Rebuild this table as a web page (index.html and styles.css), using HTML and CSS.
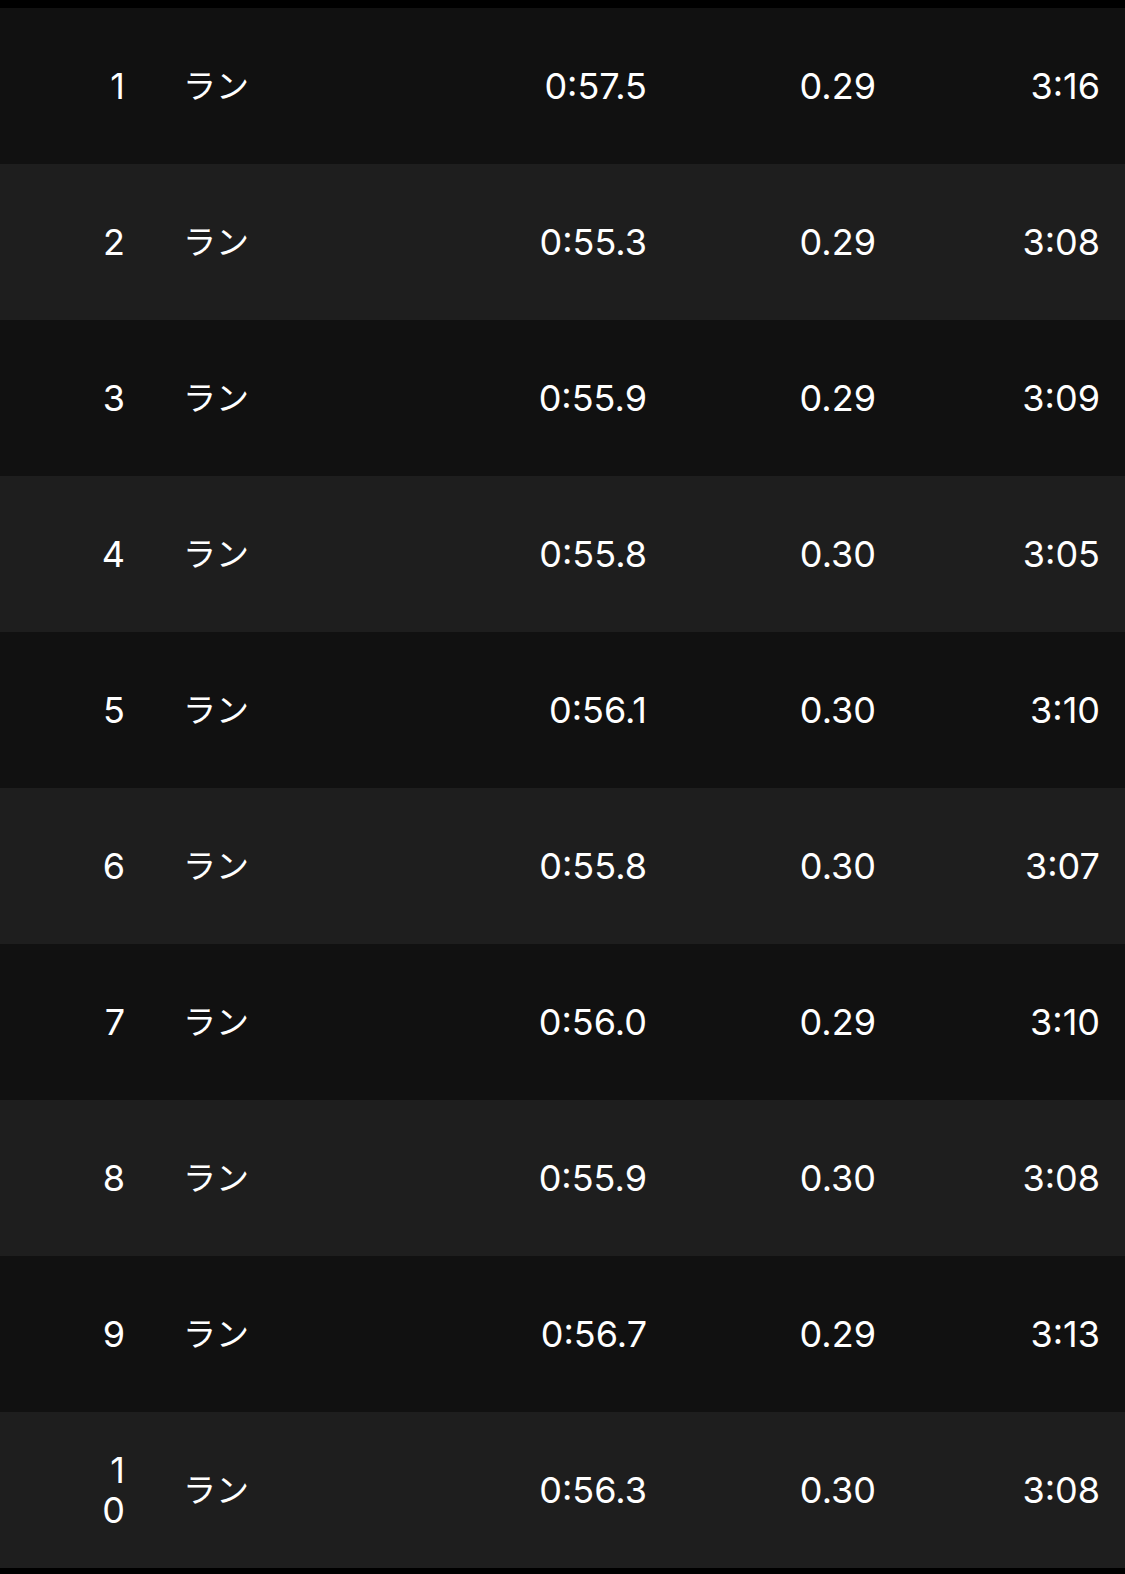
FILE: index.html
```html
<!DOCTYPE html>
<html lang="ja">
<head>
<meta charset="utf-8">
<link rel="stylesheet" href="styles.css">
</head>
<body>
<div class="table">
  <div class="row"><div class="num">1</div><div class="name">ラン</div><div class="time">0:57.5</div><div class="dist">0.29</div><div class="pace">3:16</div></div>
  <div class="row"><div class="num">2</div><div class="name">ラン</div><div class="time">0:55.3</div><div class="dist">0.29</div><div class="pace">3:08</div></div>
  <div class="row"><div class="num">3</div><div class="name">ラン</div><div class="time">0:55.9</div><div class="dist">0.29</div><div class="pace">3:09</div></div>
  <div class="row"><div class="num">4</div><div class="name">ラン</div><div class="time">0:55.8</div><div class="dist">0.30</div><div class="pace">3:05</div></div>
  <div class="row"><div class="num">5</div><div class="name">ラン</div><div class="time">0:56.1</div><div class="dist">0.30</div><div class="pace">3:10</div></div>
  <div class="row"><div class="num">6</div><div class="name">ラン</div><div class="time">0:55.8</div><div class="dist">0.30</div><div class="pace">3:07</div></div>
  <div class="row"><div class="num">7</div><div class="name">ラン</div><div class="time">0:56.0</div><div class="dist">0.29</div><div class="pace">3:10</div></div>
  <div class="row"><div class="num">8</div><div class="name">ラン</div><div class="time">0:55.9</div><div class="dist">0.30</div><div class="pace">3:08</div></div>
  <div class="row"><div class="num">9</div><div class="name">ラン</div><div class="time">0:56.7</div><div class="dist">0.29</div><div class="pace">3:13</div></div>
  <div class="row"><div class="num">10</div><div class="name">ラン</div><div class="time">0:56.3</div><div class="dist">0.30</div><div class="pace">3:08</div></div>
</div>
</body>
</html>
```

FILE: styles.css
```css
html, body {
  margin: 0;
  padding: 0;
  background: #000;
}
body {
  font-family: Inter, "Noto Sans CJK JP", sans-serif;
  color: #fff;
  font-size: 36px;
  font-weight: 400;
}
.table {
  padding-top: 8px;
}
.row {
  display: grid;
  grid-template-columns: 30px 1fr 150px 229px 224px;
  align-items: center;
  height: 156px;
  padding: 0 25px 0 95px;
  line-height: 40px;
}
.row:nth-child(odd) {
  background: #111111;
}
.row:nth-child(even) {
  background: #1e1e1e;
}
.num {
  text-align: right;
  word-break: break-all;
}
.name {
  padding-left: 58px;
  font-size: 33px;
}
.time, .dist, .pace {
  text-align: right;
}
```
